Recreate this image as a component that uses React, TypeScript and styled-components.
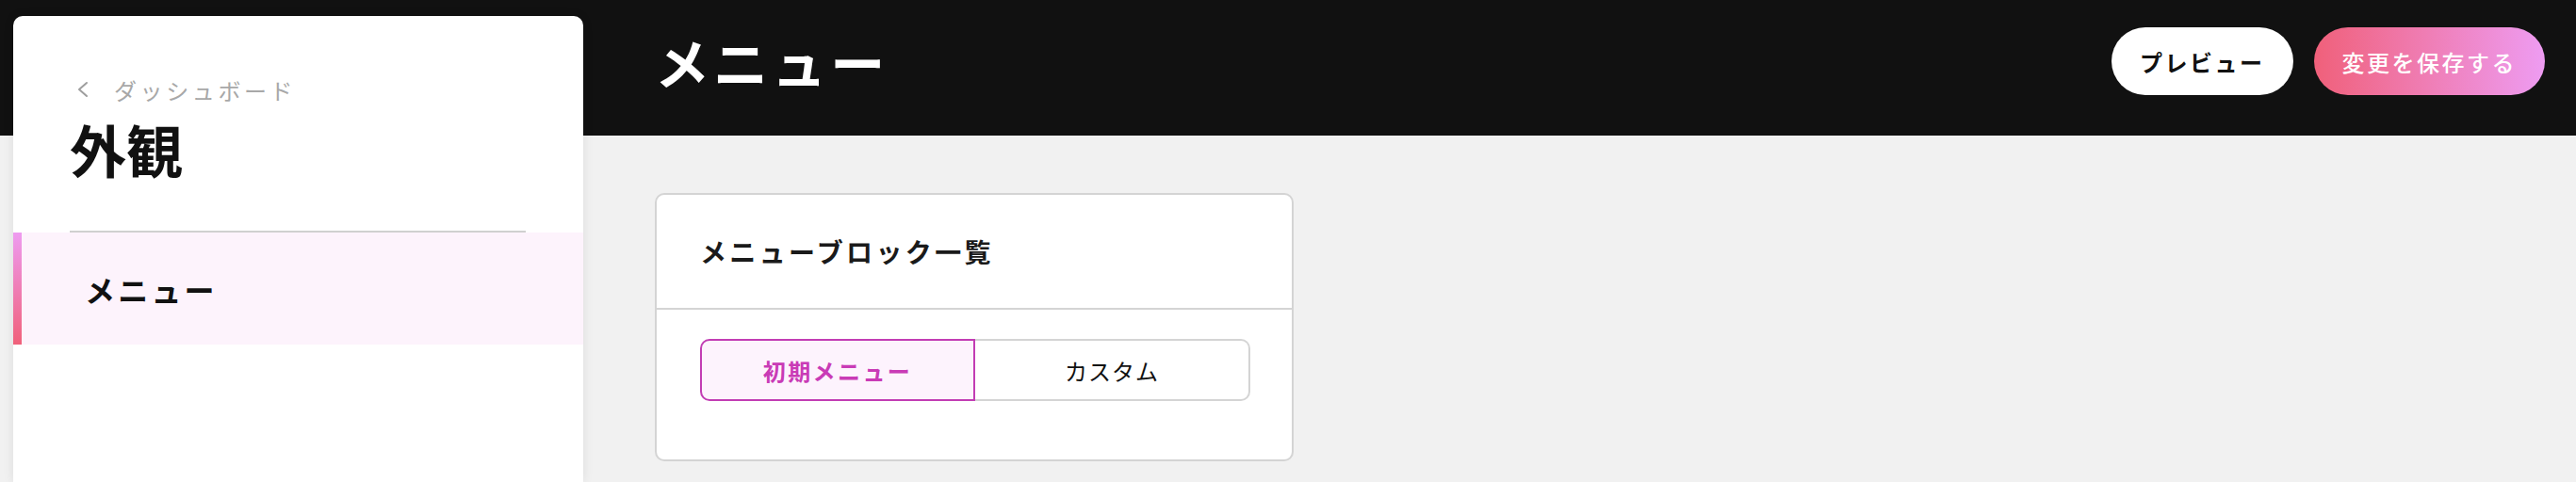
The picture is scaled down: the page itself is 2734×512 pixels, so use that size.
import React from "react";
import styled, { createGlobalStyle } from "styled-components";

const GlobalStyle = createGlobalStyle`
  html, body {
    margin: 0;
    padding: 0;
    background: #f1f1f1;
  }
  body {
    font-family: "Noto Sans CJK JP", "Noto Sans", sans-serif;
    color: #111111;
  }
  * { box-sizing: border-box; }
`;

const Page = styled.div`
  min-height: 512px;
  display: grid;
  grid-template-columns: 605px 1fr;
  column-gap: 76px;
  padding-left: 14px;
  background: linear-gradient(to bottom, #111111 0, #111111 144px, #f1f1f1 144px);
`;

const Sidebar = styled.aside`
  margin-top: 17px;
  min-height: 495px;
  background: #ffffff;
  border-radius: 10px 10px 0 0;
  box-shadow: 0 0 12px rgba(0, 0, 0, 0.09);
  display: flex;
  flex-direction: column;
`;

const SidebarHead = styled.div`
  padding: 60px 61px 0 60px;
`;

const Breadcrumb = styled.a`
  display: flex;
  align-items: center;
  gap: 23px;
  height: 36px;
  color: #a8a8a8;
  font-size: 24px;
  letter-spacing: 0.15em;
  text-decoration: none;
  svg {
    margin-left: 4px;
    flex: none;
  }
`;

const PageTitle = styled.h1`
  margin: 10px 0 0 0;
  font-size: 60px;
  line-height: 70px;
  font-weight: 700;
  color: #111111;
`;

const Divider = styled.hr`
  margin: 52px 0 0 0;
  border: none;
  height: 2px;
  background: #d0d0d0;
`;

const NavItem = styled.div<{ $active?: boolean }>`
  display: flex;
  align-items: stretch;
  height: 119px;
  background: ${(p) => (p.$active ? "#fdf3fc" : "transparent")};
`;

const Accent = styled.span`
  width: 9px;
  flex: none;
  background: linear-gradient(to bottom, #ee9bf0, #f0617a);
`;

const NavLabel = styled.span`
  display: flex;
  align-items: center;
  padding-left: 67px;
  font-size: 32px;
  font-weight: 700;
  letter-spacing: 0.1em;
  color: #111111;
`;

const Main = styled.main`
  display: flex;
  flex-direction: column;
`;

const TopBar = styled.header`
  height: 144px;
  padding: 0 33px 14px 0;
  display: flex;
  align-items: center;
  justify-content: space-between;
`;

const TopTitle = styled.h2`
  margin: 0;
  font-size: 58px;
  line-height: 1;
  font-weight: 700;
  letter-spacing: 0.07em;
  color: #ffffff;
`;

const Actions = styled.div`
  display: flex;
  gap: 22px;
`;

const PillButton = styled.button<{ $primary?: boolean }>`
  height: 72px;
  padding: 0 30px;
  border: none;
  border-radius: 36px;
  font-family: "Noto Sans CJK JP", sans-serif;
  font-size: 24px;
  letter-spacing: 2.5px;
  font-weight: ${(p) => (p.$primary ? 500 : 700)};
  color: ${(p) => (p.$primary ? "#ffffff" : "#111111")};
  background: ${(p) =>
    p.$primary ? "linear-gradient(to right, #f0607a, #ee9cf2)" : "#ffffff"};
  cursor: pointer;
`;

const Content = styled.section`
  padding-top: 61px;
`;

const Card = styled.div`
  width: 678px;
  height: 285px;
  background: #ffffff;
  border: 2px solid #d4d4d4;
  border-radius: 10px;
  display: flex;
  flex-direction: column;
`;

const CardHeader = styled.div`
  height: 122px;
  padding-left: 46px;
  display: flex;
  align-items: center;
  border-bottom: 2px solid #d4d4d4;
`;

const CardTitle = styled.h3`
  margin: 0;
  font-size: 28px;
  font-weight: 700;
  letter-spacing: 0.12em;
  color: #1a1a1a;
`;

const CardBody = styled.div`
  padding: 31px 44px 0 46px;
`;

const Segmented = styled.div`
  display: grid;
  grid-template-columns: 1fr 1fr;
  height: 66px;
`;

const Segment = styled.button<{ $active?: boolean }>`
  font-family: "Noto Sans CJK JP", sans-serif;
  font-size: 24px;
  cursor: pointer;
  padding: 0;
  ${(p) =>
    p.$active
      ? `
    border: 2px solid #c23db4;
    border-radius: 10px 0 0 10px;
    background: #fdf3fd;
    color: #c93bb6;
    font-weight: 700;
    letter-spacing: 0.1em;
  `
      : `
    border: 2px solid #d4d4d4;
    border-left: none;
    border-radius: 0 10px 10px 0;
    background: #ffffff;
    color: #111111;
    font-weight: 400;
    letter-spacing: 0.04em;
  `}
`;

const ChevronLeft = () => (
  <svg width="20" height="20" viewBox="0 0 20 20" fill="none" aria-hidden="true">
    <path
      d="M14 3 L6 10 L14 17"
      stroke="#9e9e9e"
      strokeWidth="2"
      strokeLinecap="round"
      strokeLinejoin="round"
    />
  </svg>
);

export default function App() {
  return (
    <>
      <GlobalStyle />
      <Page>
        <Sidebar>
          <SidebarHead>
            <Breadcrumb href="#">
              <ChevronLeft />
              <span>ダッシュボード</span>
            </Breadcrumb>
            <PageTitle>外観</PageTitle>
            <Divider />
          </SidebarHead>
          <NavItem $active>
            <Accent />
            <NavLabel>メニュー</NavLabel>
          </NavItem>
        </Sidebar>
        <Main>
          <TopBar>
            <TopTitle>メニュー</TopTitle>
            <Actions>
              <PillButton>プレビュー</PillButton>
              <PillButton $primary>変更を保存する</PillButton>
            </Actions>
          </TopBar>
          <Content>
            <Card>
              <CardHeader>
                <CardTitle>メニューブロック一覧</CardTitle>
              </CardHeader>
              <CardBody>
                <Segmented>
                  <Segment $active>初期メニュー</Segment>
                  <Segment>カスタム</Segment>
                </Segmented>
              </CardBody>
            </Card>
          </Content>
        </Main>
      </Page>
    </>
  );
}
